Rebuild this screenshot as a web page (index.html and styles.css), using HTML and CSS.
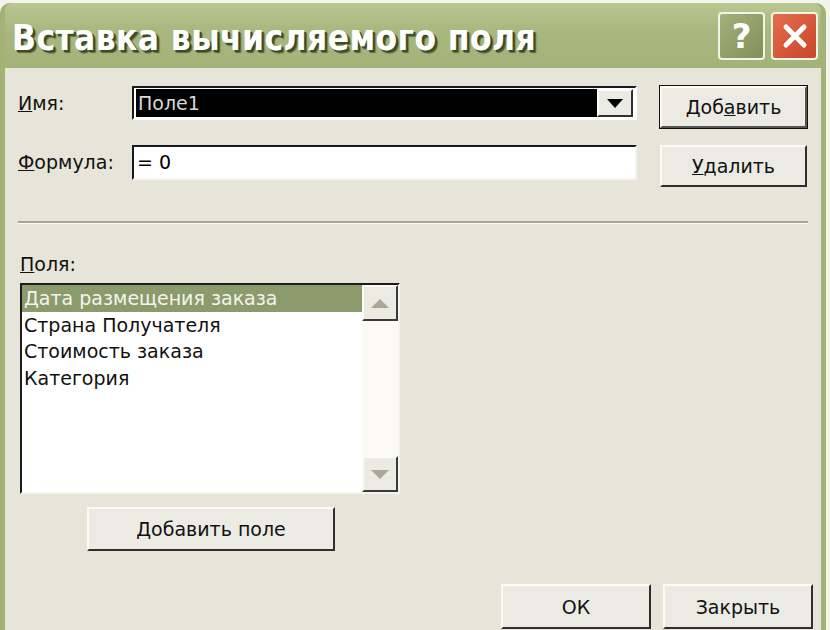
FILE: index.html
```html
<!DOCTYPE html>
<html lang="ru">
<head>
  <meta charset="UTF-8" />
  <title>Вставка вычисляемого поля</title>
  <link rel="stylesheet" href="styles.css">
</head>
<body>
  <div class="window">
    <div class="titlebar">
      <span class="title">Вставка вычисляемого поля</span>
      <div class="caption-btns">
        <span class="cap-btn help">?</span>
        <span class="cap-btn close">
          <svg width="30" height="30" viewBox="0 0 30 30">
            <path d="M6 6 L24 24 M24 6 L6 24" stroke="#fff" stroke-width="5" stroke-linecap="round"/>
          </svg>
        </span>
      </div>
    </div>

    <div class="client">
      <div class="form-grid">
        <label class="lbl"><u>И</u>мя:</label>
        <div class="combo">
          <span class="combo-value">Поле1</span>
          <span class="combo-arrow">
            <svg width="16" height="9" viewBox="0 0 16 9"><path d="M0 0 H16 L8 9 Z" fill="#000"/></svg>
          </span>
        </div>
        <button class="btn default">Доб<u>а</u>вить</button>

        <label class="lbl"><u>Ф</u>ормула:</label>
        <div class="textbox">= 0</div>
        <button class="btn"><u>У</u>далить</button>
      </div>

      <div class="separator"></div>

      <label class="lbl fields-lbl"><u>П</u>оля:</label>
      <div class="listbox">
        <ul class="items">
          <li class="selected"><u>Д</u>ата размещения заказа</li>
          <li>Страна Получателя</li>
          <li>Стоимость заказа</li>
          <li>Категория</li>
        </ul>
        <div class="scrollbar">
          <span class="sb-btn">
            <svg width="18" height="9" viewBox="0 0 18 9"><path d="M0 9 L9 0 L18 9 Z" fill="#a8a89a"/></svg>
          </span>
          <span class="sb-track"></span>
          <span class="sb-btn">
            <svg width="18" height="9" viewBox="0 0 18 9"><path d="M0 0 H18 L9 9 Z" fill="#a8a89a"/></svg>
          </span>
        </div>
      </div>

      <button class="btn add-field">Добавить поле</button>

      <div class="footer">
        <button class="btn wide">ОК</button>
        <button class="btn wide">Закрыть</button>
      </div>
    </div>
  </div>
</body>
</html>
```

FILE: styles.css
```css
body {
  margin: 0;
  background-color: #f4f4ef;
  font-family: "DejaVu Sans", "Liberation Sans", sans-serif;
  overflow: hidden;
}

.window {
  width: 816px;
  height: 627px;
  margin-top: 3px;
  background-color: #a6b67c;
  border-left: 5px solid #a3b377;
  border-right: 5px solid #a3b377;
  border-radius: 10px 10px 0 0;
  display: flex;
  flex-direction: column;
}

.titlebar {
  height: 65px;
  background: linear-gradient(#bac891, #a9b87f 40%, #a3b279);
  display: flex;
  align-items: center;
  justify-content: space-between;
  padding: 0 3px 0 7px;
  border-radius: 8px 8px 0 0;
}

.title {
  color: #fff;
  font-family: "DejaVu Sans Condensed", "DejaVu Sans", sans-serif;
  font-weight: bold;
  font-size: 35px;
  letter-spacing: 0.4px;
  text-shadow: 2px 2px 0 #3e4a28, 3px 3px 1px #5a6a3a;
  padding-top: 4px;
}

.caption-btns {
  display: flex;
  gap: 6px;
}

.cap-btn {
  width: 43px;
  height: 44px;
  border: 2px solid #f2f4e8;
  border-radius: 4px;
  display: flex;
  align-items: center;
  justify-content: center;
  color: #fff;
  font-size: 34px;
  font-weight: bold;
}

.help {
  background: linear-gradient(135deg, #a3b07c, #838f5a);
}

.close {
  background: linear-gradient(135deg, #e56e4e, #c9452a);
}

.client {
  flex: 1;
  background-color: #e7e5d9;
  padding: 18px 8px 0 13px;
}

.lbl {
  font-size: 19px;
  color: #111;
}

.form-grid {
  display: grid;
  grid-template-columns: 114px 505px 147px;
  grid-template-rows: 42px 42px;
  row-gap: 17px;
  align-items: start;
}

.form-grid .lbl {
  line-height: 34px;
}

.form-grid .btn {
  margin-left: 23px;
}

.combo {
  height: 34px;
  box-sizing: border-box;
  border-top: 2px solid #1a1a1a;
  border-left: 2px solid #1a1a1a;
  border-right: 2px solid #fff;
  border-bottom: 2px solid #fff;
  background-color: #fff;
  display: flex;
  padding: 1px 2px;
}

.combo-value {
  flex: 1;
  background-color: #000;
  color: #d8d8d8;
  font-size: 19px;
  line-height: 28px;
  padding-left: 2px;
}

.combo-arrow {
  width: 36px;
  box-sizing: border-box;
  background-color: #ecebe2;
  border-top: 2px solid #fff;
  border-left: 2px solid #fff;
  border-right: 2px solid #303030;
  border-bottom: 2px solid #303030;
  display: flex;
  align-items: center;
  justify-content: center;
}

.textbox {
  height: 35px;
  box-sizing: border-box;
  border-top: 2px solid #1a1a1a;
  border-left: 2px solid #1a1a1a;
  border-right: 2px solid #f4f4f0;
  border-bottom: 2px solid #f4f4f0;
  background-color: #fff;
  font-size: 19px;
  line-height: 31px;
  padding-left: 3px;
}

.btn {
  font-family: "DejaVu Sans", "Liberation Sans", sans-serif;
  font-size: 19px;
  color: #111;
  background-color: #ecebe3;
  border-top: 2px solid #fbfbf6;
  border-left: 2px solid #fbfbf6;
  border-right: 2px solid #2e2e2e;
  border-bottom: 2px solid #2e2e2e;
  height: 42px;
  width: 147px;
  padding: 0;
}

.btn.default {
  box-shadow: 0 0 0 1px #111;
  border-right-color: #555;
  border-bottom-color: #555;
}

.separator {
  height: 0;
  border-top: 2px solid #a8a597;
  border-bottom: 1px solid #fbfbf6;
  margin-top: 34px;
  width: 790px;
}

.fields-lbl {
  display: block;
  margin: 23px 0 0 2px;
  line-height: 34px;
}

.listbox {
  width: 380px;
  height: 211px;
  box-sizing: border-box;
  margin: 2px 0 0 2px;
  border-top: 2px solid #1c1c1c;
  border-left: 2px solid #1c1c1c;
  border-right: 2px solid #f4f4ee;
  border-bottom: 2px solid #f4f4ee;
  background-color: #fff;
  display: flex;
}

.items {
  flex: 1;
  list-style: none;
  margin: 0;
  padding: 0;
}

.items li {
  font-size: 19px;
  line-height: 26.5px;
  padding-left: 2px;
  color: #111;
  white-space: nowrap;
}

.items li.selected {
  background-color: #8c9b6b;
  color: #f4f4ee;
}

.scrollbar {
  width: 36px;
  display: flex;
  flex-direction: column;
  background-color: #fbfbf4;
}

.sb-btn {
  height: 36px;
  box-sizing: border-box;
  background-color: #ecebe3;
  border-top: 2px solid #fbfbf6;
  border-left: 2px solid #fbfbf6;
  border-right: 2px solid #3a3a3a;
  border-bottom: 2px solid #3a3a3a;
  display: flex;
  align-items: center;
  justify-content: center;
}

.sb-track {
  flex: 1;
}

.add-field {
  display: block;
  width: 248px;
  height: 44px;
  margin: 13px 0 0 69px;
}

.footer {
  display: flex;
  justify-content: flex-end;
  gap: 12px;
  margin-top: 33px;
}

.footer .btn.wide {
  width: 150px;
  height: 45px;
}
```
